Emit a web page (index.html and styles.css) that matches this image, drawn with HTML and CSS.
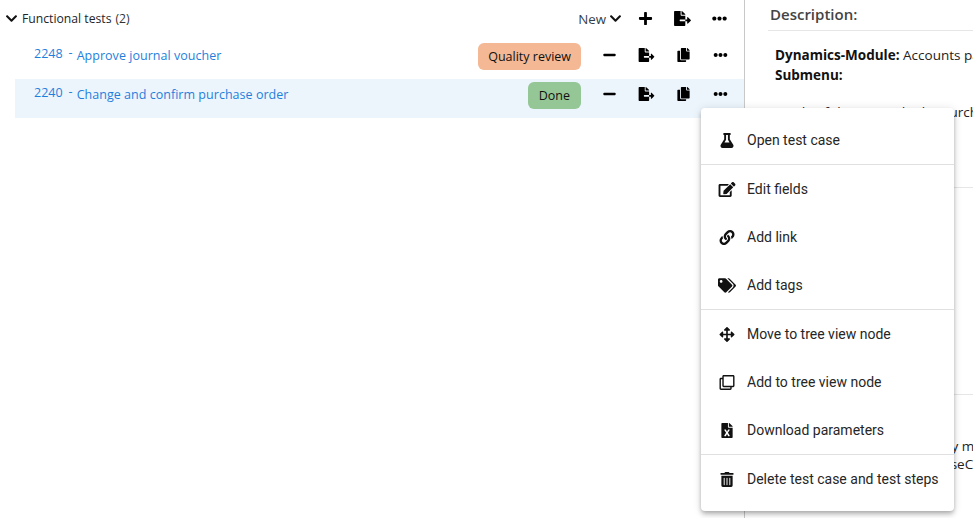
FILE: index.html
```html
<!DOCTYPE html>
<html lang="en">
<head>
<meta charset="utf-8">
<title>Functional tests</title>
<link rel="stylesheet" href="styles.css">
</head>
<body>
<svg class="defs" aria-hidden="true">
  <symbol id="i-export" viewBox="0 0 576 512"><path d="M384 121.9c0-6.3-2.5-12.4-7-16.9L279.1 7c-4.5-4.5-10.6-7-17-7H256v128h128v-6.1zM571 308l-95.7-96.4c-10.1-10.1-27.4-3-27.4 11.3V288h-64v64h64v65.2c0 14.3 17.3 21.4 27.4 11.3L571 332c6.6-6.6 6.6-17.4 0-24zm-379 28v-32c0-8.8 7.2-16 16-16h176V160H248c-13.2 0-24-10.8-24-24V0H24C10.7 0 0 10.7 0 24v464c0 13.3 10.7 24 24 24h336c13.3 0 24-10.7 24-24V352H208c-8.8 0-16-7.2-16-16z"/></symbol>
  <symbol id="i-copy" viewBox="0 0 448 512"><path d="M320 448v40c0 13.255-10.745 24-24 24H24c-13.255 0-24-10.745-24-24V120c0-13.255 10.745-24 24-24h72v296c0 30.879 25.121 56 56 56h168zm0-344V0H152c-13.255 0-24 10.745-24 24v368c0 13.255 10.745 24 24 24h272c13.255 0 24-10.745 24-24V128H344c-13.2 0-24-10.8-24-24zm120.971-31.029L375.029 7.029A24 24 0 0 0 358.059 0H352v96h96v-6.059a24 24 0 0 0-7.029-16.97z"/></symbol>
  <symbol id="i-more" viewBox="0 0 512 512"><path d="M328 256c0 39.8-32.2 72-72 72s-72-32.2-72-72 32.2-72 72-72 72 32.2 72 72zm104-72c-39.8 0-72 32.2-72 72s32.2 72 72 72 72-32.2 72-72-32.2-72-72-72zm-352 0c-39.8 0-72 32.2-72 72s32.2 72 72 72 72-32.2 72-72-32.2-72-72-72z"/></symbol>
  <symbol id="i-plus" viewBox="0 0 448 512"><path d="M416 208H272V64c0-17.67-14.33-32-32-32h-32c-17.67 0-32 14.33-32 32v144H32c-17.67 0-32 14.33-32 32v32c0 17.67 14.33 32 32 32h144v144c0 17.67 14.33 32 32 32h32c17.67 0 32-14.33 32-32V304h144c17.67 0 32-14.33 32-32v-32c0-17.67-14.33-32-32-32z"/></symbol>
  <symbol id="i-minus" viewBox="0 0 448 512"><path d="M416 208H32c-17.67 0-32 14.33-32 32v32c0 17.67 14.33 32 32 32h384c17.67 0 32-14.33 32-32v-32c0-17.67-14.33-32-32-32z"/></symbol>
  <symbol id="i-chevron" viewBox="0 0 448 512"><path d="M207 381.5L12.7 187.1c-9.4-9.4-9.4-24.6 0-33.9l22.7-22.7c9.4-9.4 24.5-9.4 33.9 0L224 284.5l154.7-154c9.4-9.3 24.5-9.3 33.9 0l22.7 22.7c9.4 9.4 9.4 24.6 0 33.9L241 381.5c-9.4 9.4-24.6 9.4-34 0z"/></symbol>
  <symbol id="i-flask" viewBox="0 0 448 512"><path d="M437.2 403.5L320 215V64h8c13.3 0 24-10.7 24-24V24c0-13.3-10.7-24-24-24H120c-13.3 0-24 10.7-24 24v16c0 13.3 10.7 24 24 24h8v151L10.8 403.5C-18.5 450.6 15.3 512 70.9 512h306.2c55.7 0 89.4-61.5 60.1-108.5zM137.9 320l48.2-77.6c3.7-5.2 5.8-11.6 5.8-18.4V64h64v160c0 6.9 2.2 13.2 5.8 18.4l48.2 77.6h-172z"/></symbol>
  <symbol id="i-edit" viewBox="0 0 576 512"><path d="M402.6 83.2l90.2 90.2c3.8 3.8 3.8 10 0 13.8L274.4 405.6l-92.8 10.3c-12.4 1.4-22.9-9.1-21.5-21.5l10.3-92.8L388.8 83.2c3.8-3.8 10-3.8 13.8 0zm162-22.9l-48.8-48.8c-15.2-15.2-39.9-15.2-55.2 0l-35.4 35.4c-3.8 3.8-3.8 10 0 13.8l90.2 90.2c3.8 3.8 10 3.8 13.8 0l35.4-35.4c15.2-15.3 15.2-40 0-55.2zM384 346.2V448H64V128h229.8c3.2 0 6.2-1.3 8.5-3.5l40-40c7.6-7.6 2.2-20.5-8.5-20.5H48C21.5 64 0 85.5 0 112v352c0 26.5 21.5 48 48 48h352c26.5 0 48-21.5 48-48V306.2c0-10.7-12.9-16-20.5-8.5l-40 40c-2.2 2.3-3.5 5.3-3.5 8.5z"/></symbol>
  <symbol id="i-link" viewBox="0 0 512 512"><path d="M326.612 185.391c59.747 59.809 58.927 155.698.36 214.59-.11.12-.24.25-.36.37l-67.2 67.2c-59.27 59.27-155.699 59.262-214.96 0-59.27-59.26-59.27-155.7 0-214.96l37.106-37.106c9.84-9.84 26.786-3.3 27.294 10.606.648 17.722 3.826 35.527 9.69 52.721 1.986 5.822.567 12.262-3.783 16.612l-13.087 13.087c-28.026 28.026-28.905 73.66-1.155 101.96 28.024 28.579 74.086 28.749 102.325.51l67.2-67.19c28.191-28.191 28.073-73.757 0-101.83-3.701-3.694-7.429-6.564-10.341-8.569a16.037 16.037 0 0 1-6.947-12.606c-.396-10.567 3.348-21.456 11.698-29.806l21.054-21.055c5.521-5.521 14.182-6.199 20.584-1.731a152.482 152.482 0 0 1 20.522 17.197zM467.547 44.449c-59.261-59.262-155.69-59.27-214.96 0l-67.2 67.2c-.12.12-.25.25-.36.37-58.566 58.892-59.387 154.781.36 214.59a152.454 152.454 0 0 0 20.521 17.196c6.402 4.468 15.064 3.789 20.584-1.731l21.054-21.055c8.35-8.35 12.094-19.239 11.698-29.806a16.037 16.037 0 0 0-6.947-12.606c-2.912-2.005-6.64-4.875-10.341-8.569-28.073-28.073-28.191-73.639 0-101.83l67.2-67.19c28.239-28.239 74.3-28.069 102.325.51 27.75 28.3 26.872 73.934-1.155 101.96l-13.087 13.087c-4.35 4.35-5.769 10.79-3.783 16.612 5.864 17.194 9.042 34.999 9.69 52.721.509 13.906 17.454 20.446 27.294 10.606l37.106-37.106c59.271-59.259 59.271-155.699.001-214.959z"/></symbol>
  <symbol id="i-tags" viewBox="0 0 640 512"><path d="M497.941 225.941L286.059 14.059A48 48 0 0 0 252.118 0H48C21.49 0 0 21.49 0 48v204.118a48 48 0 0 0 14.059 33.941l211.882 211.882c18.744 18.745 49.136 18.746 67.882 0l204.118-204.118c18.745-18.745 18.745-49.137 0-67.882zM112 160c-26.51 0-48-21.49-48-48s21.49-48 48-48 48 21.49 48 48-21.49 48-48 48zm513.941 133.823L421.823 497.941c-18.745 18.745-49.137 18.745-67.882 0l-.36-.36L527.64 323.522c16.999-16.999 26.36-39.6 26.36-63.64s-9.362-46.641-26.36-63.64L331.397 0h48.721a48 48 0 0 1 33.941 14.059l211.882 211.882c18.745 18.745 18.745 49.137 0 67.882z"/></symbol>
  <symbol id="i-arrows" viewBox="0 0 512 512"><path d="M352.201 425.775l-79.196 79.196c-9.373 9.373-24.568 9.373-33.941 0l-79.196-79.196c-15.119-15.119-4.411-40.971 16.971-40.97h51.162L228 284H127.196v51.162c0 21.382-25.851 32.09-40.971 16.971L7.029 272.937c-9.373-9.373-9.373-24.569 0-33.941L86.225 159.8c15.119-15.119 40.971-4.411 40.971 16.971V228H228V127.196h-51.23c-21.382 0-32.09-25.851-16.971-40.971l79.196-79.196c9.373-9.373 24.568-9.373 33.941 0l79.196 79.196c15.119 15.119 4.411 40.971-16.971 40.971h-51.162V228h100.804v-51.162c0-21.382 25.851-32.09 40.97-16.971l79.196 79.196c9.373 9.373 9.373 24.569 0 33.941L425.773 352.2c-15.119 15.119-40.971 4.411-40.97-16.971V284H284v100.804h51.23c21.382 0 32.09 25.851 16.971 40.971z"/></symbol>
  <symbol id="i-clone" viewBox="0 0 512 512"><path d="M464 0H144c-26.51 0-48 21.49-48 48v48H48c-26.51 0-48 21.49-48 48v320c0 26.51 21.49 48 48 48h320c26.51 0 48-21.49 48-48v-48h48c26.51 0 48-21.49 48-48V48c0-26.51-21.49-48-48-48zM362 464H54a6 6 0 0 1-6-6V150a6 6 0 0 1 6-6h42v224c0 26.51 21.49 48 48 48h224v42a6 6 0 0 1-6 6zm96-96H150a6 6 0 0 1-6-6V54a6 6 0 0 1 6-6h308a6 6 0 0 1 6 6v308a6 6 0 0 1-6 6z"/></symbol>
  <symbol id="i-excel" viewBox="0 0 384 512"><path d="M224 136V0H24C10.7 0 0 10.7 0 24v464c0 13.3 10.7 24 24 24h336c13.3 0 24-10.7 24-24V160H248c-13.2 0-24-10.8-24-24zm60.1 106.5L224 336l60.1 93.5c5.1 8-.6 18.5-10.1 18.5h-34.9c-4.4 0-8.5-2.4-10.6-6.3C208.9 405.5 192 373 192 373c-6.4 14.8-10 20-36.6 68.8-2.1 3.9-6.1 6.3-10.5 6.3H110c-9.5 0-15.2-10.5-10.1-18.5l60.3-93.5-60.3-93.5c-5.2-8 .6-18.5 10.1-18.5h34.8c4.4 0 8.5 2.4 10.6 6.3 26.1 48.8 20 33.6 36.6 68.5 0 0 6.1-11.7 36.6-68.5 2.1-3.9 6.2-6.3 10.6-6.3H274c9.5-.1 15.2 10.4 10.1 18.4zM384 121.9v6.1H256V0h6.1c6.4 0 12.5 2.5 17 7l97.9 98c4.5 4.5 7 10.6 7 16.9z"/></symbol>
  <symbol id="i-trash" viewBox="0 0 448 512"><path d="M32 464a48 48 0 0 0 48 48h288a48 48 0 0 0 48-48V128H32zm272-256a16 16 0 0 1 32 0v224a16 16 0 0 1-32 0zm-96 0a16 16 0 0 1 32 0v224a16 16 0 0 1-32 0zm-96 0a16 16 0 0 1 32 0v224a16 16 0 0 1-32 0zM432 32H312l-9.4-18.7A24 24 0 0 0 281.1 0H166.8a23.72 23.72 0 0 0-21.4 13.3L136 32H16A16 16 0 0 0 0 48v32a16 16 0 0 0 16 16h416a16 16 0 0 0 16-16V48a16 16 0 0 0-16-16z"/></symbol>
</svg>

<div class="page">
  <main class="list">
    <header class="group">
      <svg class="chev"><use href="#i-chevron"/></svg>
      <span class="group-title">Functional tests</span>
      <span class="group-count">(2)</span>
      <span class="new">New <svg class="chev chev-new"><use href="#i-chevron"/></svg></span>
      <div class="actions actions-head">
        <svg class="ic"><use href="#i-plus"/></svg>
        <svg class="ic"><use href="#i-export"/></svg>
        <svg class="ic"><use href="#i-more"/></svg>
      </div>
    </header>

    <div class="row">
      <a class="case-id">2248</a><span class="sep">-</span><a class="case-name">Approve journal voucher</a>
      <span class="badge badge-review">Quality review</span>
      <div class="actions">
        <svg class="ic"><use href="#i-minus"/></svg>
        <svg class="ic"><use href="#i-export"/></svg>
        <svg class="ic"><use href="#i-copy"/></svg>
        <svg class="ic"><use href="#i-more"/></svg>
      </div>
    </div>

    <div class="row row-active">
      <a class="case-id">2240</a><span class="sep">-</span><a class="case-name">Change and confirm purchase order</a>
      <span class="badge badge-done">Done</span>
      <div class="actions">
        <svg class="ic"><use href="#i-minus"/></svg>
        <svg class="ic"><use href="#i-export"/></svg>
        <svg class="ic"><use href="#i-copy"/></svg>
        <svg class="ic"><use href="#i-more"/></svg>
      </div>
    </div>
  </main>

  <aside class="detail">
    <h2 class="detail-title">Description:</h2>
    <section class="detail-block block-one">
      <p><b>Dynamics-Module:</b> Accounts payable</p>
      <p><b>Submenu:</b></p>
      <p class="para">Inside of this test, edit the purchase order</p>
    </section>
    <section class="detail-block block-two"></section>
    <section class="block-three">
      <p>The order is then changed by manager</p>
      <p>Test data for orders: PurchaseConfirm</p>
    </section>
  </aside>
</div>

<nav class="menu">
  <div class="item"><svg class="mi"><use href="#i-flask"/></svg>Open test case</div>
  <hr class="rule">
  <div class="item"><svg class="mi"><use href="#i-edit"/></svg>Edit fields</div>
  <div class="item"><svg class="mi"><use href="#i-link"/></svg>Add link</div>
  <div class="item"><svg class="mi"><use href="#i-tags"/></svg>Add tags</div>
  <hr class="rule">
  <div class="item"><svg class="mi"><use href="#i-arrows"/></svg>Move to tree view node</div>
  <div class="item"><svg class="mi"><use href="#i-clone"/></svg>Add to tree view node</div>
  <div class="item"><svg class="mi"><use href="#i-excel"/></svg>Download parameters</div>
  <hr class="rule">
  <div class="item"><svg class="mi"><use href="#i-trash"/></svg>Delete test case and test steps</div>
</nav>
</body>
</html>
```

FILE: styles.css
```css
* { box-sizing: border-box; }
html, body { margin: 0; height: 100%; overflow: hidden; background: #fff; }
body { font-family: "Open Sans", "Noto Sans", sans-serif; font-size: 12.5px; color: #212529; position: relative; }
.defs { display: none; }
svg { fill: currentColor; display: block; flex: none; }

.page { display: flex; height: 518px; }
.list { width: 745px; flex: none; border-right: 1px solid #c8c8c8; padding-left: 15px; color: #000; }

.group { display: flex; align-items: center; height: 37px; margin: 0 0 3px -10px; }
.chev { width: 13px; height: 13px; margin-right: 4px; color: #111; }
.group-title { color: #212529; font-size: 12.2px; }
.group-count { margin-left: 4px; font-size: 12.2px; color: #333; }
.new { margin-left: auto; display: flex; align-items: center; gap: 3px; color: #333f4a; font-size: 13.3px; margin-right: 4.5px; }
.chev-new { margin-right: 0; }

.actions { display: flex; width: 163px; padding: 0 5.5px 0 9.5px; align-self: stretch; }
.actions .ic { width: 37px; height: 14px; margin-top: 5px; }
.actions-head { width: 117.5px; padding: 0 6px 0 0; }
.actions-head .ic { width: 37px; height: 15px; margin-top: 11px; }

.row { display: flex; align-items: flex-start; height: 39px; padding: 3px 0 0 19px; line-height: 24px; }
.row-active { background: #edf5fc; }
.case-id { color: #1f7fdc; position: relative; top: -1px; }
.sep { color: #1f7fdc; margin: 0 4px 0 6px; position: relative; top: -2px; }
.case-name { color: #1f7fdc; letter-spacing: .03px; position: relative; top: 1px; }
.badge { margin-left: auto; height: 27px; display: flex; align-items: center; border-radius: 6px; color: #111; }
.badge-review { background: #f4b894; padding: 0 10px; }
.badge-done { background: #94c795; padding: 0 11px; }

.detail { flex: 1; min-width: 0; overflow: hidden; white-space: nowrap; padding-left: 24px; font-size: 13.5px; color: #222; }
.detail b { color: #111; }
.detail-title { margin: 0 0 0 -1px; height: 31px; padding: 4px 0 0 2px; font-size: 15px; font-weight: 600; color: #444; border-bottom: 1px solid #e6e6e6; line-height: 20px; }
.detail p { margin: 0; line-height: 20px; }
.detail-block { border-bottom: 1px solid #e6e6e6; margin-left: -1px; }
.block-one { height: 157px; padding: 14px 0 0 7px; }
.block-one .para { margin-top: 17px; }
.block-two { height: 207px; }
.block-three { padding: 42px 0 0 6px; }
.block-three p { line-height: 18px; }

.menu { position: absolute; left: 701px; top: 108px; width: 253px; padding: 8px 0; background: #fff; border-radius: 4px; box-shadow: 0 2px 4px -1px rgba(0,0,0,.2), 0 4px 5px rgba(0,0,0,.14), 0 1px 10px rgba(0,0,0,.12); font-family: Roboto, sans-serif; font-size: 14px; color: #262626; }
.item { display: flex; align-items: center; height: 48px; padding-left: 17px; white-space: nowrap; }
.mi { width: 18px; height: 15px; margin-right: 11px; color: #111; }
.rule { margin: 0; border: 0; border-top: 1px solid #e0e0e0; height: 1px; }
```
